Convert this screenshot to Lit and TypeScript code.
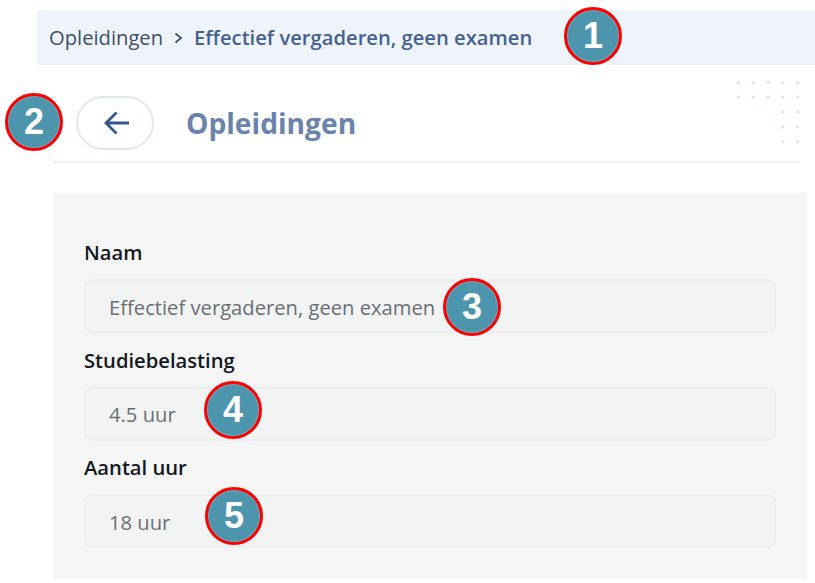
import {LitElement, css, html, svg} from 'lit';
import {customElement} from 'lit/decorators.js';

const FIELDS = [
  {label: 'Naam', value: 'Effectief vergaderen, geen examen'},
  {label: 'Studiebelasting', value: '4.5 uur'},
  {label: 'Aantal uur', value: '18 uur'},
];

const BADGES = [
  {n: 1, x: 593, y: 36},
  {n: 2, x: 34, y: 122},
  {n: 3, x: 472, y: 307},
  {n: 4, x: 233, y: 410},
  {n: 5, x: 234, y: 516},
];

// decorative dot grid, top row and second row are full, then only two columns
const DOTS: [number, number][] = [];
for (let row = 0; row < 5; row++) {
  for (let col = row < 2 ? 0 : 3; col < 5; col++) {
    DOTS.push([2.5 + col * 14.8, 2.5 + row * 14.8]);
  }
}

@customElement('app-root')
export class AppRoot extends LitElement {
  static styles = css`
    :host {
      display: block;
      position: relative;
      width: 815px;
      height: 583px;
      overflow: hidden;
      background: #fff;
      font-family: 'Open Sans', 'Noto Sans', sans-serif;
    }

    .crumbs {
      display: flex;
      align-items: center;
      height: 55px;
      margin: 10px 0 0 37px;
      padding: 0 0 2px 12px;
      box-sizing: border-box;
      background: #eff4fc;
      font-size: 20.2px;
      color: #3d4f66;
    }

    .crumbs svg {
      margin: 2px 11px 0 10px;
    }

    .crumbs .current {
      color: #45628f;
      font-weight: 600;
    }

    .head {
      display: flex;
      align-items: center;
      height: 98px;
      margin: 0 15px 0 53px;
      padding: 19px 0 0 23px;
      box-sizing: border-box;
      border-bottom: 2px solid #edf1f7;
    }

    .back {
      display: flex;
      align-items: center;
      justify-content: center;
      width: 78px;
      height: 54px;
      box-sizing: border-box;
      border: 2px solid #dfe7f3;
      border-radius: 27px;
      background: #fff;
      padding: 0 0 0 4px;
    }

    h1 {
      margin: 0 0 0 32px;
      font-size: 28.2px;
      font-weight: 700;
      color: #6a83ad;
    }

    .dots {
      position: absolute;
      left: 736px;
      top: 80px;
    }

    .panel {
      display: flex;
      flex-direction: column;
      height: 386px;
      margin: 30px 8px 0 53px;
      padding: 45px 31px 0;
      box-sizing: border-box;
      background: #f5f5f5;
    }

    .label {
      height: 41px;
      line-height: 28px;
      font-size: 20.2px;
      font-weight: 600;
      color: #14181f;
    }

    .value {
      display: flex;
      align-items: center;
      height: 54px;
      margin-bottom: 12.5px;
      padding: 1px 0 0 23px;
      box-sizing: border-box;
      border: 2px solid #ebedee;
      border-radius: 8px;
      background: #f2f3f3;
      font-size: 20.2px;
      color: #6a6e74;
    }

    .badge {
      position: absolute;
      display: flex;
      align-items: center;
      justify-content: center;
      width: 58px;
      height: 58px;
      box-sizing: border-box;
      border: 3px solid #ff0000;
      border-radius: 50%;
      background: #4d94ad;
      box-shadow: inset 0 0 0 1px rgba(255, 255, 255, 0.2);
      color: #fff;
      font-family: 'Liberation Sans', Arial, sans-serif;
      font-size: 36px;
      font-weight: 700;
    }
  `;

  render() {
    return html`
      <nav class="crumbs">
        <span>Opleidingen</span>
        <svg width="10" height="12" viewBox="0 0 10 12" fill="none" stroke="#3d4f66" stroke-width="1.8">
          <path d="M2.5 1.5 L8 6 L2.5 10.5" />
        </svg>
        <span class="current">Effectief vergaderen, geen examen</span>
      </nav>
      <header class="head">
        <button class="back">
          <svg width="28" height="28" viewBox="0 0 28 28" fill="none" stroke="#34568f" stroke-width="2.8">
            <path d="M26 14 H3 M13.5 3.5 L3 14 L13.5 24.5" />
          </svg>
        </button>
        <h1>Opleidingen</h1>
      </header>
      <svg class="dots" width="70" height="70">
        ${DOTS.map(([x, y]) => svg`<rect x=${x - 1.5} y=${y - 1.5} width="3" height="3" fill="#dbe4f6" />`)}
      </svg>
      <section class="panel">
        ${FIELDS.map(
          (f) => html`
            <div class="label">${f.label}</div>
            <div class="value">${f.value}</div>
          `
        )}
      </section>
      ${BADGES.map(
        (b) => html`<div class="badge" style="left:${b.x - 29}px;top:${b.y - 29}px">${b.n}</div>`
      )}
    `;
  }
}
